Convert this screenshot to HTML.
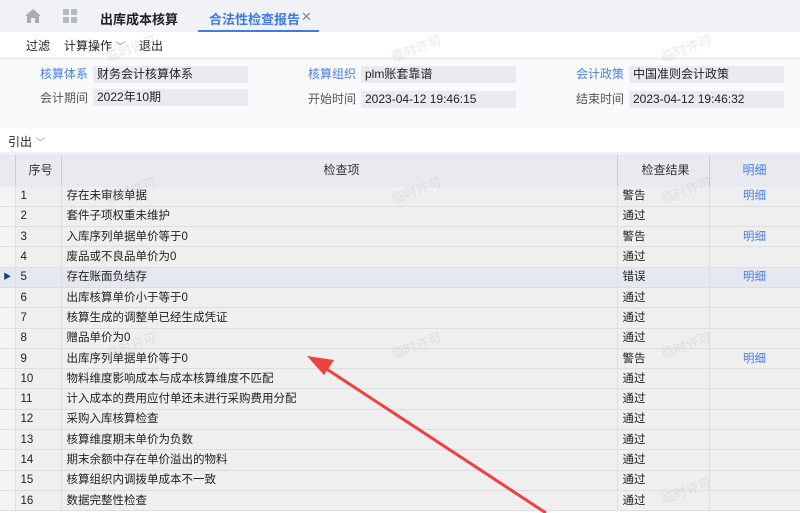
<html><head><style>
*{margin:0;padding:0;box-sizing:border-box}
body{width:800px;height:513px;overflow:hidden;background:#fff;font-family:"Liberation Sans","Noto Sans CJK SC",sans-serif;font-size:12px;color:#222;position:relative}
.abs{position:absolute}
.tabs{left:0;top:0;width:800px;height:32px;background:#f0f2f5}
.tb{left:0;top:32px;width:800px;height:24px;background:#fff}
.form{left:0;top:60px;width:800px;height:68px;background:#f9fafc}
.lbl{font-size:12px;color:#555;text-align:right;width:60px;line-height:17px}
.val{background:#e9ebee;height:17px;line-height:17px;padding-left:4px;font-size:12px;color:#222}
table{position:absolute;left:0;top:155px;width:800px;border-collapse:collapse;table-layout:fixed}
td{height:20.3px;border-bottom:1.5px solid #dcdee2;border-right:1.5px solid #dcdee2;padding-left:5px;font-size:11.5px;background:#efefef;white-space:nowrap;overflow:hidden;vertical-align:middle;line-height:14px}
tr.h td{height:31px;background:#e8eaf0;text-align:center;font-size:12px;color:#333;border-right:1.5px solid #c8cad0;border-bottom:1px solid #e8eaf0}
td.i{background:#f3f3f3;padding:0}
tr.sel td{background:#e6e8f0}
.lk{color:#4a7ee8;text-align:center;padding:0}
.wm{color:rgba(190,190,190,.35);font-size:13px;transform:rotate(-20deg)}
</style></head><body>
<div class="abs tabs"></div>
<svg class="abs" style="left:25px;top:9px" width="16" height="14" viewBox="0 0 16 14"><path d="M8 0L0 7h2v7h4V9h4v5h4V7h2z" fill="#a9adb5"/></svg>
<svg class="abs" style="left:63px;top:9px" width="15" height="15"><rect x="0" y="0" width="6" height="6" rx="1" fill="#b5b9c0"/><rect x="8" y="0" width="6" height="6" rx="1" fill="#b5b9c0"/><rect x="0" y="8" width="6" height="6" rx="1" fill="#b5b9c0"/><rect x="8" y="8" width="6" height="6" rx="1" fill="#b5b9c0"/></svg>
<div class="abs" style="left:100px;top:9px;font-size:13px;font-weight:bold;color:#222">出库成本核算</div>
<div class="abs" style="left:209px;top:9px;font-size:13px;font-weight:bold;color:#3f7ae6">合法性检查报告</div>
<div class="abs" style="left:301px;top:9px;font-size:13px;color:#888">✕</div>
<div class="abs" style="left:198px;top:30px;width:121px;height:2px;background:#3f7ae6"></div>
<div class="abs tb"></div>
<div class="abs" style="left:26px;top:37px">过滤</div>
<div class="abs" style="left:64px;top:37px">计算操作 <span style="color:#888;font-size:10px">﹀</span></div>
<div class="abs" style="left:139px;top:37px">退出</div>
<div class="abs" style="left:0;top:57px;width:800px;height:3px;background:#eef0f3"></div>
<div class="abs form"></div>
<div class="abs lbl" style="left:28px;top:66px;color:#4a7ee8">核算体系</div>
<div class="abs val" style="left:93px;top:66px;width:155px">财务会计核算体系</div>
<div class="abs lbl" style="left:28px;top:90px">会计期间</div>
<div class="abs val" style="left:93px;top:89px;width:155px">2022年10期</div>
<div class="abs lbl" style="left:296px;top:66px;color:#4a7ee8">核算组织</div>
<div class="abs val" style="left:361px;top:66px;width:155px">plm账套靠谱</div>
<div class="abs lbl" style="left:296px;top:91px">开始时间</div>
<div class="abs val" style="left:361px;top:91px;width:155px">2023-04-12 19:46:15</div>
<div class="abs lbl" style="left:564px;top:66px;color:#4a7ee8">会计政策</div>
<div class="abs val" style="left:629px;top:66px;width:155px">中国准则会计政策</div>
<div class="abs lbl" style="left:564px;top:91px">结束时间</div>
<div class="abs val" style="left:629px;top:91px;width:155px">2023-04-12 19:46:32</div>
<div class="abs" style="left:8px;top:133px">引出 <span style="color:#999;font-size:10px">﹀</span></div>
<div class="abs" style="left:0;top:152px;width:800px;height:3px;background:#eef0f3"></div>
<table>
<colgroup><col style="width:15px"><col style="width:46px"><col style="width:556px"><col style="width:92px"><col style="width:91px"></colgroup>
<tr class="h"><td class="i" style="background:#e8eaf0"></td><td>序号</td><td>检查项</td><td>检查结果</td><td class="lk" style="color:#4a7ee8">明细</td></tr>
<tr><td class="i"></td><td>1</td><td>存在未审核单据</td><td>警告</td><td class="lk">明细</td></tr>
<tr><td class="i"></td><td>2</td><td>套件子项权重未维护</td><td>通过</td><td class="lk"></td></tr>
<tr><td class="i"></td><td>3</td><td>入库序列单据单价等于0</td><td>警告</td><td class="lk">明细</td></tr>
<tr><td class="i"></td><td>4</td><td>废品或不良品单价为0</td><td>通过</td><td class="lk"></td></tr>
<tr class="sel"><td class="i" style="color:#1a3a8a;font-size:8px;text-align:center">▶</td><td>5</td><td>存在账面负结存</td><td>错误</td><td class="lk">明细</td></tr>
<tr><td class="i"></td><td>6</td><td>出库核算单价小于等于0</td><td>通过</td><td class="lk"></td></tr>
<tr><td class="i"></td><td>7</td><td>核算生成的调整单已经生成凭证</td><td>通过</td><td class="lk"></td></tr>
<tr><td class="i"></td><td>8</td><td>赠品单价为0</td><td>通过</td><td class="lk"></td></tr>
<tr><td class="i"></td><td>9</td><td>出库序列单据单价等于0</td><td>警告</td><td class="lk">明细</td></tr>
<tr><td class="i"></td><td>10</td><td>物料维度影响成本与成本核算维度不匹配</td><td>通过</td><td class="lk"></td></tr>
<tr><td class="i"></td><td>11</td><td>计入成本的费用应付单还未进行采购费用分配</td><td>通过</td><td class="lk"></td></tr>
<tr><td class="i"></td><td>12</td><td>采购入库核算检查</td><td>通过</td><td class="lk"></td></tr>
<tr><td class="i"></td><td>13</td><td>核算维度期末单价为负数</td><td>通过</td><td class="lk"></td></tr>
<tr><td class="i"></td><td>14</td><td>期末余额中存在单价溢出的物料</td><td>通过</td><td class="lk"></td></tr>
<tr><td class="i"></td><td>15</td><td>核算组织内调拨单成本不一致</td><td>通过</td><td class="lk"></td></tr>
<tr><td class="i"></td><td>16</td><td>数据完整性检查</td><td>通过</td><td class="lk"></td></tr>
</table>
<div class="abs wm" style="left:105px;top:38px">临时许可</div>
<div class="abs wm" style="left:390px;top:38px">临时许可</div>
<div class="abs wm" style="left:660px;top:38px">临时许可</div>
<div class="abs wm" style="left:105px;top:180px">临时许可</div>
<div class="abs wm" style="left:390px;top:180px">临时许可</div>
<div class="abs wm" style="left:660px;top:180px">临时许可</div>
<div class="abs wm" style="left:105px;top:335px">临时许可</div>
<div class="abs wm" style="left:390px;top:335px">临时许可</div>
<div class="abs wm" style="left:660px;top:335px">临时许可</div>
<div class="abs wm" style="left:660px;top:480px">临时许可</div>
<svg class="abs" style="left:0;top:0" width="800" height="513"><line x1="546" y1="513" x2="322" y2="366" stroke="#f04040" stroke-width="3"/><path d="M307 356L334 360L324 375Z" fill="#f04040"/></svg>
</body></html>
